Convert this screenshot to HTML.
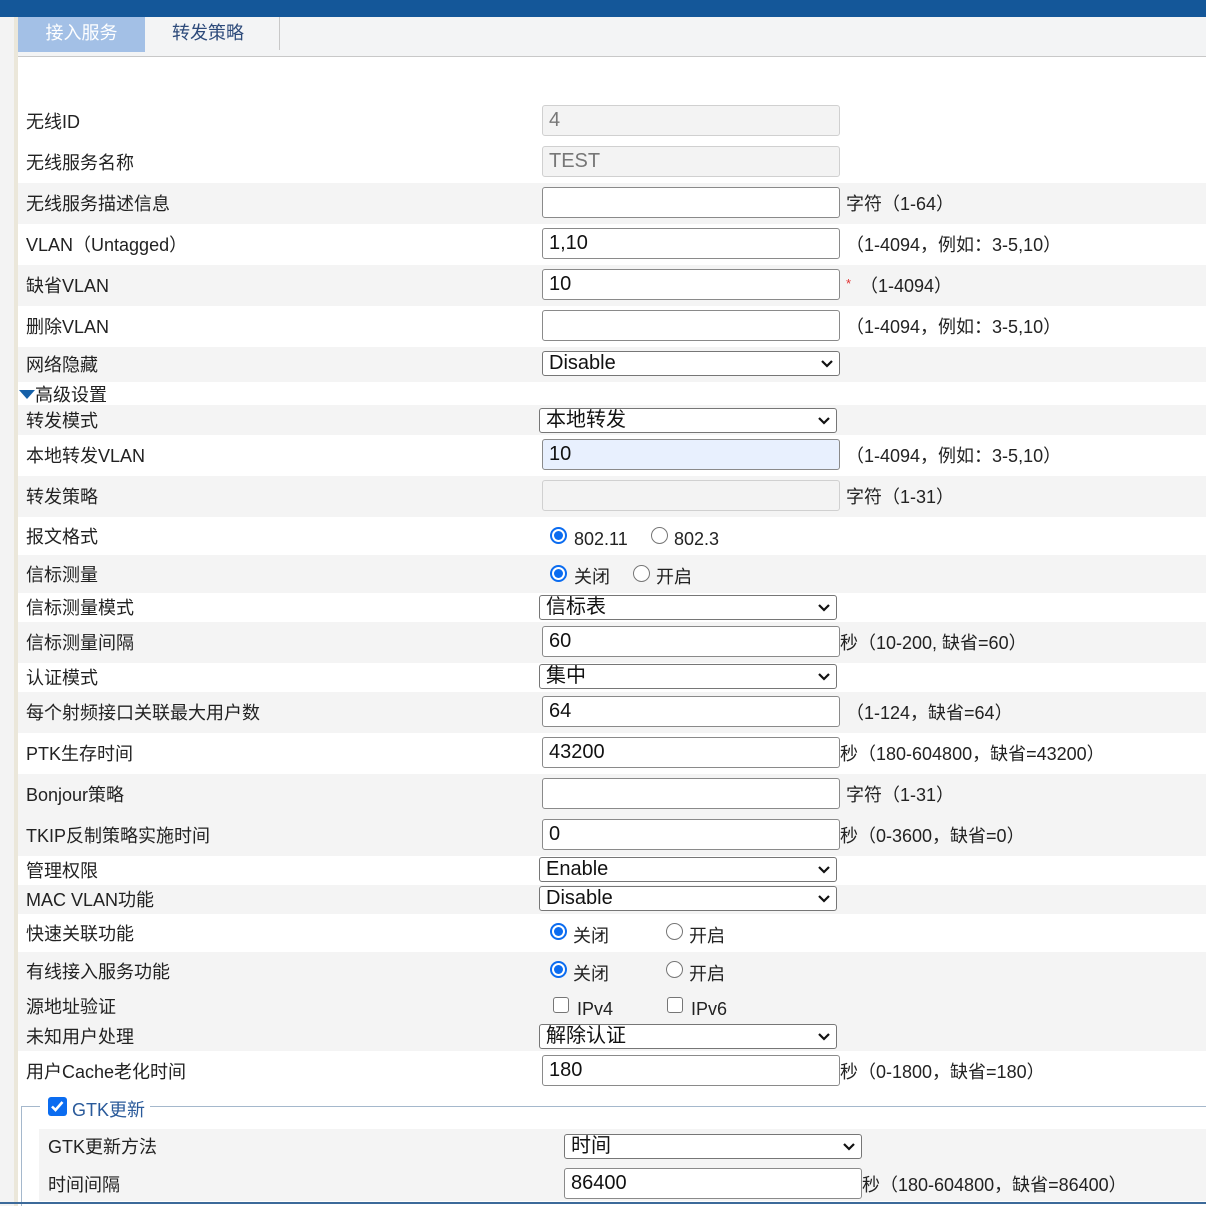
<!DOCTYPE html>
<html><head><meta charset="utf-8"><style>
*{margin:0;padding:0;box-sizing:border-box}
body{width:1206px;height:1206px;overflow:hidden;background:#fff;position:relative;font-family:"Liberation Sans","Noto Sans CJK SC",sans-serif;color:#222;font-size:18px}
.a{position:absolute}
.r{position:absolute;left:18px;right:0}
.g{background:#f4f4f4}
.lb{position:absolute;left:26px;white-space:nowrap;font-size:18px;line-height:20px}
.in{position:absolute;width:298px;height:31px;border:1px solid #8a8a8a;border-radius:3px;background:#fff;font-size:20px;line-height:29px;padding-left:6px;color:#111}
.dis{background:#f3f3f3;border-color:#d0d0d0;color:#777}
.sel{position:absolute;width:298px;height:25px;border:1px solid #767676;border-radius:3px;background:#fff;font-size:20px;line-height:23px;padding-left:6px;color:#111}
.sel svg{position:absolute;right:5px;top:7px}
.nt{position:absolute;font-size:18px;white-space:nowrap;line-height:20px;color:#222}
.rd{position:absolute;width:17px;height:17px;border:1px solid #767676;border-radius:50%;background:#fff}
.rd.on{border:2px solid #0b6cf0}
.rd.on:after{content:"";position:absolute;left:2px;top:2px;width:9px;height:9px;border-radius:50%;background:#0b6cf0}
.cb{position:absolute;width:16px;height:16px;border:1px solid #767676;border-radius:3px;background:#fff}
</style></head><body>
<div class="a" style="left:0;top:0;width:1206px;height:17px;background:#145799"></div>
<div class="a" style="left:0;top:17px;width:14px;height:1189px;background:#f3f3f3"></div>
<div class="a" style="left:14px;top:17px;width:4px;height:1189px;background:#ebe7da"></div>
<div class="a" style="left:18px;top:17px;right:0;height:40px;background:#f3f4f5;border-bottom:1px solid #c8c8c8"></div>
<div class="a" style="left:18px;top:17px;width:127px;height:35px;background:#a3c0e6;color:#fff;font-size:18px;line-height:32px;text-align:center">接入服务</div>
<div class="a" style="left:172px;top:17px;color:#2d4a7a;font-size:18px;line-height:32px">转发策略</div>
<div class="a" style="left:279px;top:17px;width:1px;height:33px;background:#c8c8c8"></div>

<div class="r" style="top:183px;height:41px" class="g"></div>
<div class="r g" style="top:183px;height:41px"></div>
<div class="r g" style="top:265px;height:41px"></div>
<div class="r g" style="top:347px;height:35px"></div>
<div class="r g" style="top:405px;height:30px"></div>
<div class="r g" style="top:476px;height:41px"></div>
<div class="r g" style="top:555px;height:38px"></div>
<div class="r g" style="top:622px;height:41px"></div>
<div class="r g" style="top:692px;height:41px"></div>
<div class="r g" style="top:774px;height:82px"></div>
<div class="r g" style="top:885px;height:29px"></div>
<div class="r g" style="top:952px;height:99px"></div>

<div class="lb" style="top:112px">无线ID</div>
<div class="in dis" style="left:542px;top:105px">4</div>
<div class="lb" style="top:153px">无线服务名称</div>
<div class="in dis" style="left:542px;top:146px">TEST</div>
<div class="lb" style="top:194px">无线服务描述信息</div>
<div class="in" style="left:542px;top:187px"></div><div class="nt" style="left:846px;top:194px">字符（1-64）</div>
<div class="lb" style="top:235px">VLAN（Untagged）</div>
<div class="in" style="left:542px;top:228px">1,10</div><div class="nt" style="left:846px;top:235px">（1-4094，例如：3-5,10）</div>
<div class="lb" style="top:276px">缺省VLAN</div>
<div class="in" style="left:542px;top:269px">10</div><div class="nt" style="left:846px;top:274px;color:#e03030;font-size:13px">*</div><div class="nt" style="left:860px;top:276px">（1-4094）</div>
<div class="lb" style="top:317px">删除VLAN</div>
<div class="in" style="left:542px;top:310px"></div><div class="nt" style="left:846px;top:317px">（1-4094，例如：3-5,10）</div>
<div class="lb" style="top:355px">网络隐藏</div>
<div class="sel" style="left:542px;top:351px">Disable<svg width="14" height="10"><path d="M2 2l5 5 5-5" stroke="#111" stroke-width="2.2" fill="none"/></svg></div>
<div class="a" style="left:19px;top:390px;width:0;height:0;border-left:8px solid transparent;border-right:8px solid transparent;border-top:9px solid #1560a8"></div>
<div class="lb" style="left:35px;top:385px">高级设置</div>
<div class="lb" style="top:411px">转发模式</div>
<div class="sel" style="left:539px;top:408px">本地转发<svg width="14" height="10"><path d="M2 2l5 5 5-5" stroke="#111" stroke-width="2.2" fill="none"/></svg></div>
<div class="lb" style="top:446px">本地转发VLAN</div>
<div class="in" style="left:542px;top:439px;background:#e8f0fe">10</div><div class="nt" style="left:846px;top:446px">（1-4094，例如：3-5,10）</div>
<div class="lb" style="top:487px">转发策略</div>
<div class="in dis" style="left:542px;top:480px"></div><div class="nt" style="left:846px;top:487px">字符（1-31）</div>
<div class="lb" style="top:527px">报文格式</div>
<div class="rd on" style="left:550px;top:527px"></div><div class="nt" style="left:574px;top:529px">802.11</div>
<div class="rd" style="left:651px;top:527px"></div><div class="nt" style="left:674px;top:529px">802.3</div>
<div class="lb" style="top:565px">信标测量</div>
<div class="rd on" style="left:550px;top:565px"></div><div class="nt" style="left:574px;top:567px">关闭</div>
<div class="rd" style="left:633px;top:565px"></div><div class="nt" style="left:656px;top:567px">开启</div>
<div class="lb" style="top:598px">信标测量模式</div>
<div class="sel" style="left:539px;top:595px">信标表<svg width="14" height="10"><path d="M2 2l5 5 5-5" stroke="#111" stroke-width="2.2" fill="none"/></svg></div>
<div class="lb" style="top:633px">信标测量间隔</div>
<div class="in" style="left:542px;top:626px">60</div><div class="nt" style="left:840px;top:633px">秒（10-200, 缺省=60）</div>
<div class="lb" style="top:668px">认证模式</div>
<div class="sel" style="left:539px;top:664px">集中<svg width="14" height="10"><path d="M2 2l5 5 5-5" stroke="#111" stroke-width="2.2" fill="none"/></svg></div>
<div class="lb" style="top:703px">每个射频接口关联最大用户数</div>
<div class="in" style="left:542px;top:696px">64</div><div class="nt" style="left:846px;top:703px">（1-124，缺省=64）</div>
<div class="lb" style="top:744px">PTK生存时间</div>
<div class="in" style="left:542px;top:737px">43200</div><div class="nt" style="left:840px;top:744px">秒（180-604800，缺省=43200）</div>
<div class="lb" style="top:785px">Bonjour策略</div>
<div class="in" style="left:542px;top:778px"></div><div class="nt" style="left:846px;top:785px">字符（1-31）</div>
<div class="lb" style="top:826px">TKIP反制策略实施时间</div>
<div class="in" style="left:542px;top:819px">0</div><div class="nt" style="left:840px;top:826px">秒（0-3600，缺省=0）</div>
<div class="lb" style="top:861px">管理权限</div>
<div class="sel" style="left:539px;top:857px">Enable<svg width="14" height="10"><path d="M2 2l5 5 5-5" stroke="#111" stroke-width="2.2" fill="none"/></svg></div>
<div class="lb" style="top:890px">MAC VLAN功能</div>
<div class="sel" style="left:539px;top:886px">Disable<svg width="14" height="10"><path d="M2 2l5 5 5-5" stroke="#111" stroke-width="2.2" fill="none"/></svg></div>
<div class="lb" style="top:924px">快速关联功能</div>
<div class="rd on" style="left:550px;top:923px"></div><div class="nt" style="left:573px;top:926px">关闭</div>
<div class="rd" style="left:666px;top:923px"></div><div class="nt" style="left:689px;top:926px">开启</div>
<div class="lb" style="top:962px">有线接入服务功能</div>
<div class="rd on" style="left:550px;top:961px"></div><div class="nt" style="left:573px;top:964px">关闭</div>
<div class="rd" style="left:666px;top:961px"></div><div class="nt" style="left:689px;top:964px">开启</div>
<div class="lb" style="top:997px">源地址验证</div>
<div class="cb" style="left:553px;top:997px"></div><div class="nt" style="left:577px;top:999px">IPv4</div>
<div class="cb" style="left:667px;top:997px"></div><div class="nt" style="left:691px;top:999px">IPv6</div>
<div class="lb" style="top:1027px">未知用户处理</div>
<div class="sel" style="left:539px;top:1024px">解除认证<svg width="14" height="10"><path d="M2 2l5 5 5-5" stroke="#111" stroke-width="2.2" fill="none"/></svg></div>
<div class="lb" style="top:1062px">用户Cache老化时间</div>
<div class="in" style="left:542px;top:1055px">180</div><div class="nt" style="left:840px;top:1062px">秒（0-1800，缺省=180）</div>

<div class="a" style="left:21px;top:1106px;right:0;height:100px;border-top:1px solid #a5b8cc;border-left:1px solid #a5b8cc"></div>
<div class="a" style="left:40px;top:1096px;width:110px;height:22px;background:#fff"></div>
<div class="a" style="left:48px;top:1097px;width:19px;height:19px;background:#0b6cf0;border-radius:3px"><svg width="19" height="19"><path d="M4 9.5l3.5 3.5 7-8" stroke="#fff" stroke-width="2.6" fill="none"/></svg></div>
<div class="nt" style="left:72px;top:1100px;color:#2a5a9a">GTK更新</div>
<div class="a g" style="left:39px;top:1129px;right:0;height:72px"></div>
<div class="lb" style="left:48px;top:1137px">GTK更新方法</div>
<div class="sel" style="left:564px;top:1134px">时间<svg width="14" height="10"><path d="M2 2l5 5 5-5" stroke="#111" stroke-width="2.2" fill="none"/></svg></div>
<div class="lb" style="left:48px;top:1175px">时间间隔</div>
<div class="in" style="left:564px;top:1168px">86400</div><div class="nt" style="left:862px;top:1175px">秒（180-604800，缺省=86400）</div>
<div class="a" style="left:0;top:1202px;width:1206px;height:2px;background:#3c6a9a"></div>
</body></html>
